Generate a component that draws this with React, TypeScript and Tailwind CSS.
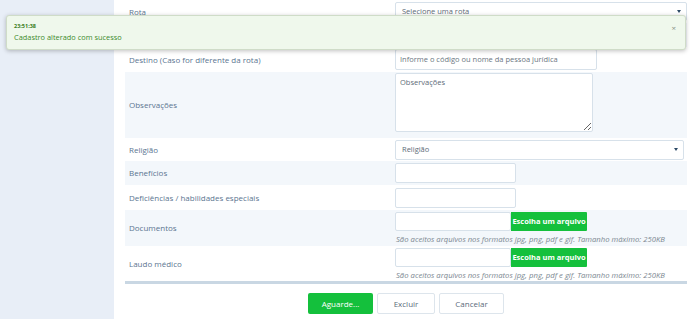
import React from "react";

const labelCls = "pl-[4px] text-[8px] text-[#5b7590]";
const inputCls = "border border-[#d7e1ea] rounded-[2px] bg-white";

function Help() {
  return (
    <div className="text-[7.7px] italic text-[#7b8791] leading-none mt-[5px] pl-[1px] whitespace-nowrap">
      São aceitos arquivos nos formatos jpg, png, pdf e gif. Tamanho máximo: 250KB
    </div>
  );
}

function FileRow({ label, striped, h }: { label: string; striped?: boolean; h: string }) {
  return (
    <div className={`grid grid-cols-[270px_1fr] items-center ${h} ${striped ? "bg-[#f3f7fb]" : "bg-white"}`}>
      <div className={labelCls}>{label}</div>
      <div className="flex flex-col">
        <div className="flex items-center">
          <div className={`${inputCls} w-[116px] h-[19px]`} />
          <div className="h-[19px] w-[76px] bg-[#14c03c] text-white text-[7.5px] font-bold flex items-center justify-center rounded-r-[1px]">
            Escolha um arquivo
          </div>
        </div>
        <Help />
      </div>
    </div>
  );
}

function SelectBox({ text, w, h }: { text: string; w: string; h: string }) {
  return (
    <div className={`${inputCls} ${w} ${h} flex items-center justify-between pl-[6px] pr-[5px] text-[7.5px] text-[#5d6b78]`}>
      <span>{text}</span>
      <span className="w-0 h-0 border-l-[2px] border-r-[2px] border-t-[3px] border-l-transparent border-r-transparent border-t-[#2c4a66]" />
    </div>
  );
}

export default function App() {
  return (
    <div className="relative w-[690px] h-[319px] overflow-hidden bg-white flex" style={{ fontFamily: '"Open Sans", "DejaVu Sans", sans-serif' }}>
      <div className="w-[114px] shrink-0 bg-[#e8eef7]" />
      <div className="flex-1 pl-[11px] pr-[3px]">
        <div className="flex flex-col">
          <div className="grid grid-cols-[270px_1fr] items-center h-[23px] bg-white">
            <div className={labelCls}>Rota</div>
            <SelectBox text="Selecione uma rota" w="w-[292px]" h="h-[19px]" />
          </div>
          <div className="grid grid-cols-[270px_1fr] items-center h-[24px] bg-[#f3f7fb]">
            <div className={labelCls}>Ponto de referência</div>
            <div className={`${inputCls} w-[202px] h-[20px]`} />
          </div>
          <div className="grid grid-cols-[270px_1fr] items-center h-[25px] bg-white">
            <div className={labelCls}>Destino (Caso for diferente da rota)</div>
            <div className={`${inputCls} w-[202px] h-[21px] flex items-center px-[4px] text-[7.5px] text-[#6b7681]`}>
              Informe o código ou nome da pessoa jurídica
            </div>
          </div>
          <div className="grid grid-cols-[270px_1fr] items-start h-[66px] bg-[#f3f7fb]">
            <div className={`${labelCls} self-center`}>Observações</div>
            <textarea
              placeholder="Observações"
              className="mt-[1px] w-[198px] h-[59px] border border-[#d7e1ea] rounded-[2px] bg-white text-[7.5px] px-[4px] py-[3px] placeholder:text-[#5d6b78] outline-none resize"
              style={{ fontFamily: '"Open Sans", sans-serif' }}
            />
          </div>
          <div className="grid grid-cols-[270px_1fr] items-center h-[23px] bg-white">
            <div className={labelCls}>Religião</div>
            <SelectBox text="Religião" w="w-[289px]" h="h-[20px]" />
          </div>
          <div className="grid grid-cols-[270px_1fr] items-center h-[24px] bg-[#f3f7fb]">
            <div className={labelCls}>Benefícios</div>
            <div className={`${inputCls} w-[121px] h-[20px]`} />
          </div>
          <div className="grid grid-cols-[270px_1fr] items-center h-[25px] bg-white">
            <div className={labelCls}>Deficiências / habilidades especiais</div>
            <div className={`${inputCls} w-[121px] h-[20px]`} />
          </div>
          <FileRow label="Documentos" striped h="h-[36px]" />
          <FileRow label="Laudo médico" h="h-[35px]" />
          <div className="h-[3px] bg-[#c9d7e3]" />
          <div className="flex justify-center gap-[4px] mt-[9px]">
            <div className="w-[65px] h-[21px] rounded-[2px] bg-[#14c03c] text-white text-[8px] flex items-center justify-center">
              Aguarde...
            </div>
            <div className="w-[58px] h-[21px] rounded-[2px] border border-[#dde5ec] bg-white text-[#5b6b7a] text-[8px] flex items-center justify-center">
              Excluir
            </div>
            <div className="w-[65px] h-[21px] rounded-[2px] border border-[#dde5ec] bg-white text-[#5b6b7a] text-[8px] flex items-center justify-center">
              Cancelar
            </div>
          </div>
        </div>
      </div>

      <div className="absolute left-[6px] top-[15px] w-[680px] h-[35px] rounded-[3px] border border-[#cfdcc8] bg-[#eff8ec] shadow-[0_1px_4px_rgba(0,0,0,0.25)] px-[7px] pt-[8px]">
        <div className="text-[5.5px] font-bold text-[#3a7d22] leading-none">23:51:38</div>
        <div className="text-[7.4px] text-[#3d8b2c] leading-none mt-[4px]">Cadastro alterado com sucesso</div>
        <div className="absolute right-[9px] top-[8px] text-[8px] text-[#8a9488] leading-none">×</div>
      </div>
    </div>
  );
}
